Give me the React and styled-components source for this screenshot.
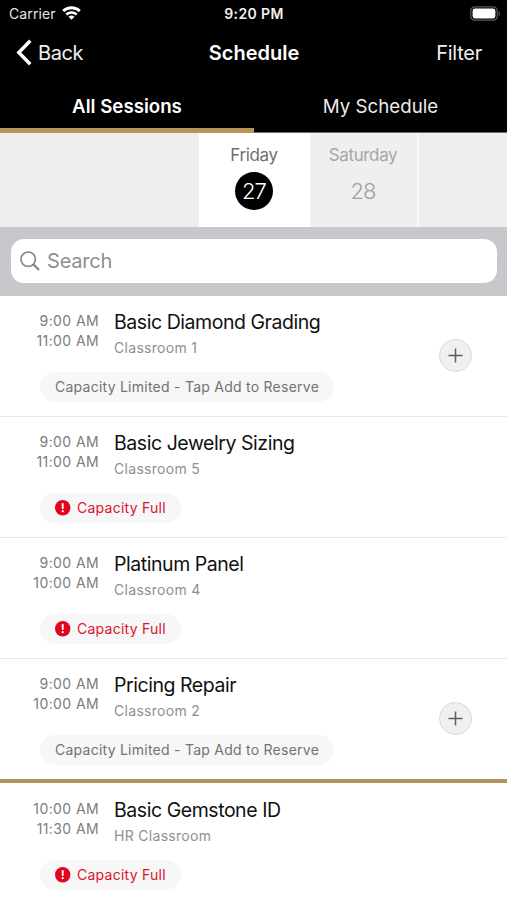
import React, { useState } from 'react';
import styled, { createGlobalStyle } from 'styled-components';

const GlobalStyle = createGlobalStyle`
  * {
    box-sizing: border-box;
  }

  body {
    margin: 0;
    background: #fff;
    font-family: Inter, "Liberation Sans", sans-serif;
  }

  button {
    padding: 0;
    border: 0;
    background: none;
    font: inherit;
    color: inherit;
  }
`;

const Screen = styled.div`
  width: 507px;
  height: 900px;
  overflow: hidden;
  background: #fff;
`;

const Header = styled.header`
  height: 133px;
  background: #000;
  color: #fff;
  border-bottom: 1px solid #6c6c6c;
`;

const StatusBar = styled.div`
  display: grid;
  grid-template-columns: 1fr auto 1fr;
  align-items: center;
  height: 28px;
  padding: 0 8px 0 9px;
  font-size: 14px;
  line-height: 28px;
`;

const Carrier = styled.span`
  display: flex;
  align-items: center;
  gap: 6px;
  color: #e4e4e4;
  letter-spacing: 0.1px;

  svg {
    margin-top: -3px;
  }
`;

const Clock = styled.span`
  font-weight: 600;
  color: #f2f2f2;
  letter-spacing: 0.4px;
`;

const Battery = styled.svg`
  justify-self: end;
  margin: -2px -2px 0 0;
`;

const NavBar = styled.nav`
  display: grid;
  grid-template-columns: 1fr auto 1fr;
  align-items: center;
  height: 49px;
  padding: 0 25px 0 16px;
  font-size: 20px;
`;

const BackButton = styled.button`
  display: flex;
  align-items: center;
  gap: 5px;
  color: #f0f0f0;
  letter-spacing: -0.45px;
`;

const NavTitle = styled.h1`
  margin: 0 0 0 10px;
  font-size: 20px;
  font-weight: 600;
`;

const FilterButton = styled.button`
  justify-self: end;
  color: #f0f0f0;
  letter-spacing: -0.25px;
`;

const Tabs = styled.div`
  display: grid;
  grid-template-columns: 254px 253px;
  height: 56px;
`;

const Tab = styled.button`
  height: 56px;
  padding-top: 8px;
  font-size: 18.7px;
  font-weight: ${props => (props.$active ? 600 : 400)};
  color: ${props => (props.$active ? '#fff' : '#ececec')};
  border-bottom: 5px solid ${props => (props.$active ? '#b8935a' : 'transparent')};
`;

const DateStrip = styled.div`
  display: grid;
  grid-template-columns: 199px 111px 107px 90px;
  height: 94px;
  background: #eeeeee;
`;

const Day = styled.button`
  display: flex;
  flex-direction: column;
  align-items: center;
  padding-top: 10px;
  padding-right: 1px;
  background: ${props => (props.$selected ? '#fff' : '#efefef')};
  color: ${props => (props.$selected ? '#6f6f6f' : '#a6a6a6')};
  font-size: 17px;
  line-height: 24px;
  letter-spacing: -0.35px;
`;

const DayNumber = styled.span`
  display: flex;
  align-items: center;
  justify-content: center;
  width: 38px;
  height: 38px;
  margin-top: 5px;
  border-radius: 50%;
  background: ${props => (props.$selected ? '#000' : 'transparent')};
  color: ${props => (props.$selected ? '#fff' : '#a0a0a0')};
  font-size: 22px;
  font-weight: 300;
  letter-spacing: -0.9px;
`;

const StripEnd = styled.div`
  border-left: 2px solid #fafafa;
`;

const SearchBar = styled.div`
  height: 69px;
  padding: 12px 10px 13px 11px;
  background: #c8c8cc;
`;

const SearchField = styled.label`
  display: flex;
  align-items: center;
  gap: 7px;
  height: 44px;
  padding-left: 9px;
  border-radius: 13px;
  background: #fff;
`;

const SearchInput = styled.input`
  flex: 1;
  padding: 0 0 1px;
  border: 0;
  outline: 0;
  background: none;
  font-family: inherit;
  font-size: 20px;
  letter-spacing: -0.2px;

  &::placeholder {
    color: #8e8e93;
    opacity: 1;
  }
`;

const SessionRow = styled.article`
  display: grid;
  grid-template-columns: 99px 1fr auto;
  column-gap: 15px;
  align-items: center;
  height: ${props => (props.$lastOfHour ? '124px' : '121px')};
  margin-bottom: ${props => (props.$lastOfHour ? '0.6px' : '0')};
  padding-right: 35px;
  border-bottom: ${props => (props.$lastOfHour ? '4px solid #b3945c' : '1px solid #e9e9e9')};
`;

const Times = styled.div`
  align-self: start;
  padding-top: 15px;
  text-align: right;
  white-space: nowrap;
  font-size: 14px;
  line-height: 20px;
  letter-spacing: 0.4px;
  color: #7c7c7c;
`;

const Info = styled.div`
  align-self: start;
  padding-top: 13px;
`;

const SessionTitle = styled.h2`
  margin: 0;
  font-size: 19.5px;
  font-weight: 400;
  line-height: 26px;
  letter-spacing: -0.45px;
  color: #111;
`;

const Room = styled.p`
  margin: 3px 0 0;
  font-size: 14px;
  line-height: 20px;
  letter-spacing: 0.3px;
  color: #8f8f8f;
`;

const StatusPill = styled.div`
  display: flex;
  align-items: center;
  gap: 6px;
  width: max-content;
  height: 30px;
  margin: 14px 0 0 -74px;
  padding: 0 15px;
  border-radius: 15px;
  background: #f7f7f7;
  font-size: 14px;
  line-height: 30px;
  letter-spacing: 0.25px;
  color: ${props => (props.$full ? '#d9142f' : '#727272')};
`;

const AddButton = styled.button`
  display: flex;
  align-items: center;
  justify-content: center;
  width: 33px;
  height: 33px;
  margin-bottom: 1px;
  border: 1px solid #d9d9d9;
  border-radius: 50%;
  background: #f0f0f0;
`;

const sessions = [
  { start: '9:00 AM', end: '11:00 AM', title: 'Basic Diamond Grading', room: 'Classroom 1', full: false },
  { start: '9:00 AM', end: '11:00 AM', title: 'Basic Jewelry Sizing', room: 'Classroom 5', full: true },
  { start: '9:00 AM', end: '10:00 AM', title: 'Platinum Panel', room: 'Classroom 4', full: true },
  { start: '9:00 AM', end: '10:00 AM', title: 'Pricing Repair', room: 'Classroom 2', full: false },
  { start: '10:00 AM', end: '11:30 AM', title: 'Basic Gemstone ID', room: 'HR Classroom', full: true }
];

const days = [
  { name: 'Friday', number: 27 },
  { name: 'Saturday', number: 28 }
];

function WifiIcon() {
  return (
    <svg width="19" height="14" viewBox="0 0 19 14" fill="none" stroke="#fff" strokeWidth="2.8">
      <path d="M1.2 5.1C5.9 .6 13.1 .6 17.8 5.1" />
      <path d="M4.3 8.5C7.3 5.7 11.7 5.7 14.7 8.5" strokeWidth="2.5" />
      <path d="M9.5 13.7L6.5 10.7C8.2 9.2 10.8 9.2 12.5 10.7Z" fill="#fff" stroke="none" />
    </svg>
  );
}

function BatteryIcon() {
  return (
    <Battery width="31" height="15" viewBox="0 0 31 15">
      <rect x="0.8" y="0.8" width="26.4" height="13.4" rx="4" fill="none" stroke="#5c5c5c" strokeWidth="1.2" />
      <rect x="2.6" y="2.6" width="22.8" height="9.8" rx="2.4" fill="#fff" />
      <path d="M28.6 5.2C30.4 5.9 30.4 9.1 28.6 9.8Z" fill="#5c5c5c" />
    </Battery>
  );
}

function FullIcon() {
  return (
    <svg width="16" height="16" viewBox="0 0 16 16">
      <circle cx="7.7" cy="7.7" r="7.7" fill="#e0061f" />
      <path d="M6.6 3.2H8.8L8.5 9H6.9Z" fill="#fff" />
      <circle cx="7.7" cy="11.2" r="1.1" fill="#fff" />
    </svg>
  );
}

function Session({ session, lastOfHour }) {
  return (
    <SessionRow $lastOfHour={lastOfHour}>
      <Times>
        <div>{session.start}</div>
        <div>{session.end}</div>
      </Times>
      <Info>
        <SessionTitle>{session.title}</SessionTitle>
        <Room>{session.room}</Room>
        <StatusPill $full={session.full}>
          {session.full && <FullIcon />}
          {session.full ? 'Capacity Full' : 'Capacity Limited - Tap Add to Reserve'}
        </StatusPill>
      </Info>
      {!session.full && (
        <AddButton aria-label="Add">
          <svg width="15" height="15" viewBox="0 0 15 15" stroke="#5c5c5c" strokeWidth="1.5">
            <path d="M7.5 .5V14.5M.5 7.5H14.5" />
          </svg>
        </AddButton>
      )}
    </SessionRow>
  );
}

function App() {
  const [tab, setTab] = useState('all');
  const [selectedDay, setSelectedDay] = useState(27);
  const [search, setSearch] = useState('');

  return (
    <Screen>
      <GlobalStyle />
      <Header>
        <StatusBar>
          <Carrier>
            Carrier
            <WifiIcon />
          </Carrier>
          <Clock>9:20 PM</Clock>
          <BatteryIcon />
        </StatusBar>
        <NavBar>
          <BackButton>
            <svg width="17" height="27" viewBox="0 0 17 27" fill="none" stroke="#fff" strokeWidth="3.4">
              <path d="M14.3 1.8L2.8 13.5L14.3 25.2" />
            </svg>
            Back
          </BackButton>
          <NavTitle>Schedule</NavTitle>
          <FilterButton>Filter</FilterButton>
        </NavBar>
        <Tabs>
          <Tab $active={tab === 'all'} onClick={() => setTab('all')}>All Sessions</Tab>
          <Tab $active={tab === 'mine'} onClick={() => setTab('mine')}>My Schedule</Tab>
        </Tabs>
      </Header>

      <DateStrip>
        <div />
        {days.map(day => (
          <Day
            key={day.number}
            $selected={day.number === selectedDay}
            onClick={() => setSelectedDay(day.number)}
          >
            {day.name}
            <DayNumber $selected={day.number === selectedDay}>{day.number}</DayNumber>
          </Day>
        ))}
        <StripEnd />
      </DateStrip>

      <SearchBar>
        <SearchField>
          <svg width="20" height="20" viewBox="0 0 20 20" fill="none" stroke="#86868a" strokeWidth="1.7">
            <circle cx="8.2" cy="8.2" r="7.2" />
            <path d="M13.4 13.4L19 19" strokeWidth="2.2" />
          </svg>
          <SearchInput
            placeholder="Search"
            value={search}
            onChange={e => setSearch(e.target.value)}
          />
        </SearchField>
      </SearchBar>

      {/* A gold rule closes each group of sessions with the same start time */}
      {sessions.map((session, i) => (
        <Session
          key={session.title}
          session={session}
          lastOfHour={i < sessions.length - 1 && sessions[i + 1].start !== session.start}
        />
      ))}
    </Screen>
  );
}

export default App;
